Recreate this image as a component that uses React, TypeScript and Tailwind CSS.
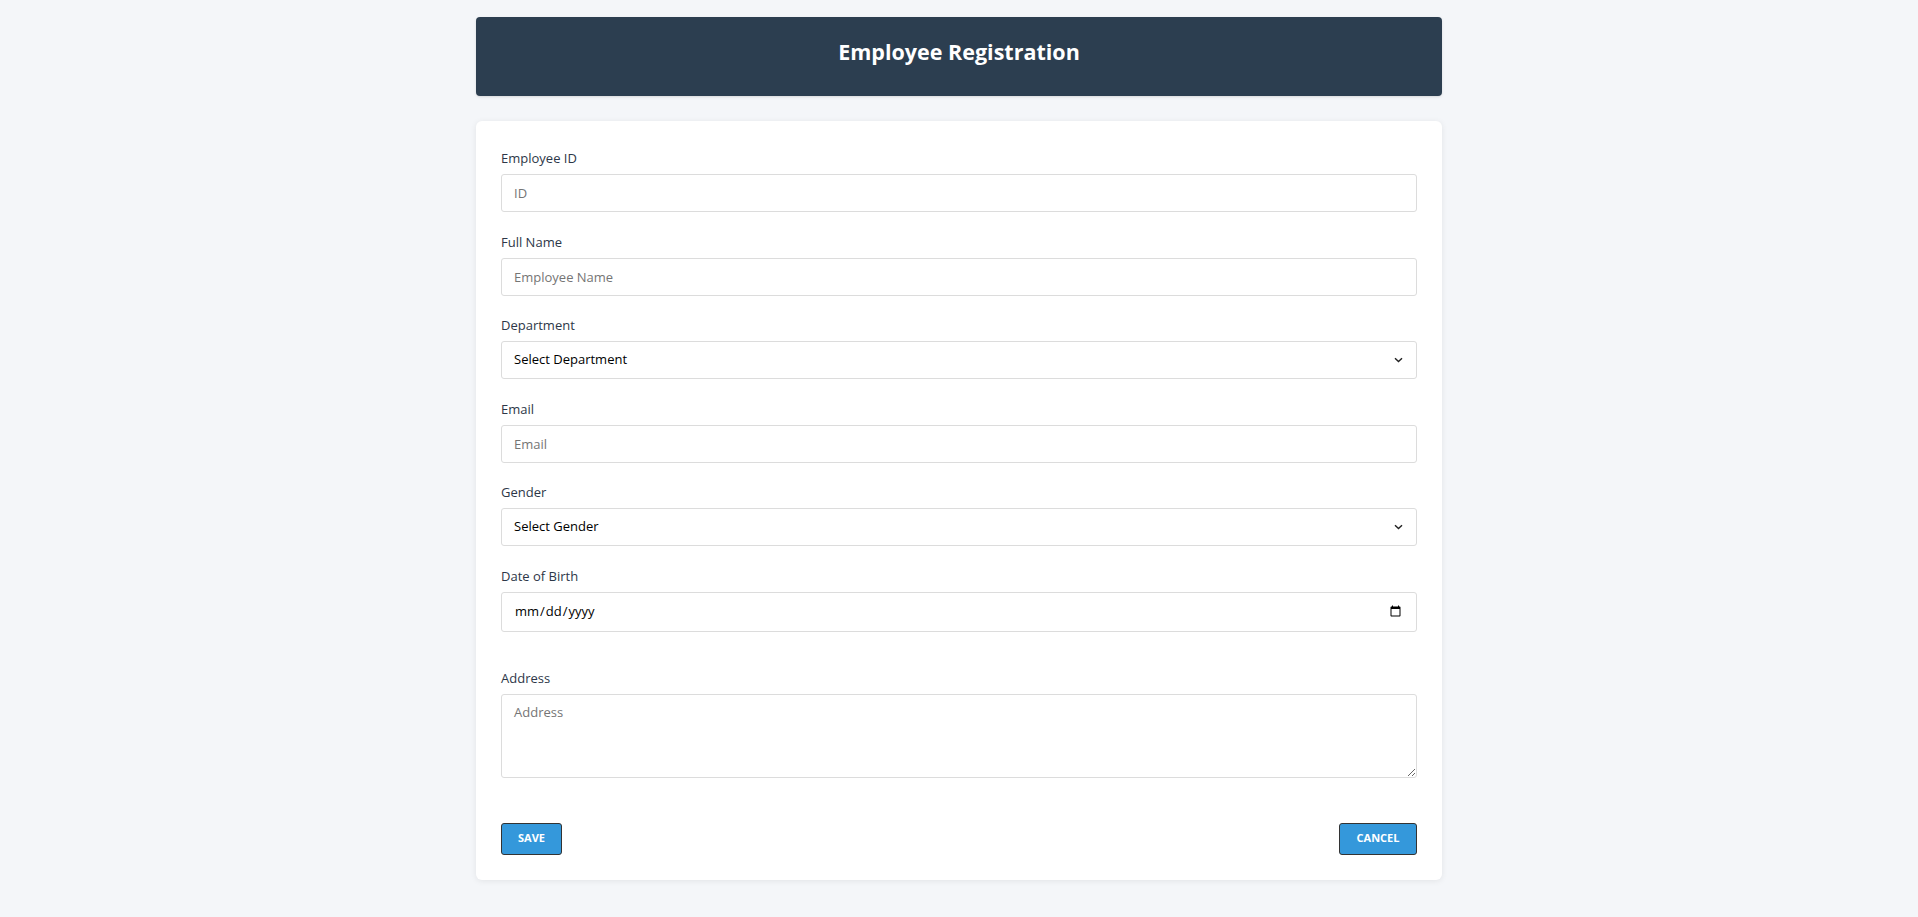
export default function App() {
  const labelCls = "block text-[13px] leading-5 text-[#2d3748] mb-[6px]";
  const fieldCls =
    "w-full h-[38px] px-3 text-[13px] border border-[#dcdcdc] rounded-[3px] bg-white outline-none placeholder:text-[#757575]";

  const Chevron = () => (
    <svg
      className="absolute right-[14px] top-1/2 -translate-y-1/2 pointer-events-none"
      width="9"
      height="6"
      viewBox="0 0 9 6"
      fill="none"
    >
      <path d="M1 1.2 L4.5 4.6 L8 1.2" stroke="#222" strokeWidth="1.4" />
    </svg>
  );

  return (
    <div className="min-h-screen bg-[#f4f6f9] pt-[17px] pb-8" style={{ fontFamily: '"Open Sans", "Noto Sans", sans-serif' }}>
      <div className="w-[966px] mx-auto">
        {/* Title bar */}
        <header className="h-[79px] bg-[#2c3e50] rounded-[4px] flex items-center justify-center pb-[9px] shadow-sm">
          <h1 className="text-white text-[21.5px] font-bold">Employee Registration</h1>
        </header>

        {/* Form card */}
        <form className="mt-[25px] bg-white rounded-[6px] shadow-[0_1px_6px_rgba(0,0,0,0.08)] px-[25px] pt-[27px] pb-[25px]">
          <div className="space-y-[19.5px]">
            <div>
              <label className={labelCls}>Employee ID</label>
              <input className={fieldCls} placeholder="ID" type="text" />
            </div>
            <div>
              <label className={labelCls}>Full Name</label>
              <input className={fieldCls} placeholder="Employee Name" type="text" />
            </div>
            <div>
              <label className={labelCls}>Department</label>
              <div className="relative">
                <select className={fieldCls + " appearance-none text-black"} defaultValue="">
                  <option value="">Select Department</option>
                  <option>Engineering</option>
                  <option>Sales</option>
                  <option>HR</option>
                </select>
                <Chevron />
              </div>
            </div>
            <div>
              <label className={labelCls}>Email</label>
              <input className={fieldCls} placeholder="Email" type="email" />
            </div>
            <div>
              <label className={labelCls}>Gender</label>
              <div className="relative">
                <select className={fieldCls + " appearance-none text-black"} defaultValue="">
                  <option value="">Select Gender</option>
                  <option>Male</option>
                  <option>Female</option>
                </select>
                <Chevron />
              </div>
            </div>
            <div>
              <label className={labelCls}>Date of Birth</label>
              <input className={fieldCls + " h-[40px] text-black"} type="date" />
            </div>
          </div>

          <div className="mt-[36px]">
            <label className={labelCls}>Address</label>
            <textarea className={fieldCls + " h-[84px] py-2 block"} placeholder="Address" />
          </div>

          <div className="mt-[45px] flex justify-between">
            <button type="button" className="h-[32px] w-[61px] bg-[#3498db] border border-[#333] rounded-[3px] text-white text-[11px] font-bold uppercase">
              Save
            </button>
            <button type="button" className="h-[32px] w-[78px] bg-[#3498db] border border-[#333] rounded-[3px] text-white text-[11px] font-bold uppercase">
              Cancel
            </button>
          </div>
        </form>
      </div>
    </div>
  );
}
